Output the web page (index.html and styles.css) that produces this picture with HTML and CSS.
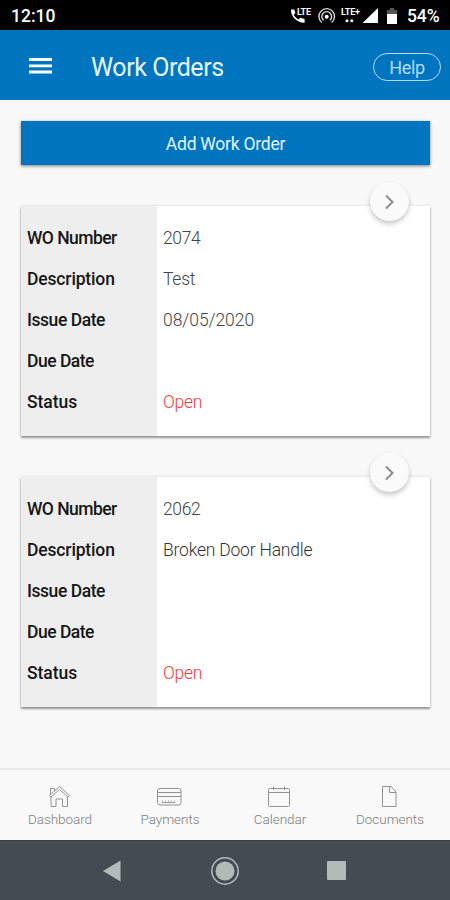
FILE: index.html
```html
<!DOCTYPE html>
<html lang="en">
<head>
<meta charset="utf-8">
<title>Work Orders</title>
<link rel="stylesheet" href="styles.css">
</head>
<body>
<div class="statusbar">
  <span class="clock">12:10</span>
  <svg class="status-icons" width="92" height="20" viewBox="0 0 92 20" fill="#fff">
    <path d="M1 3.500h3.200l1.200 3.600-1.700 1.700c1.200 2.200 2.600 3.600 4.800 4.800l1.800-1.800 4.300 1.200v3.700C7.500 17.200.5 10.500 1 3.500z"/>
    <text class="lte" x="7" y="9" textLength="14">LTE</text>
    <g fill="none" stroke="#ddd" stroke-width="1.400">
      <path d="M31.800 16.500a7.800 7.800 0 1 1 9.800 0M33.600 14.300a4.900 4.900 0 1 1 6.200 0"/>
    </g>
    <circle cx="36.700" cy="10.800" r="2"/>
    <text class="lte" x="51" y="8.500" textLength="19">LTE+</text>
    <circle cx="57" cy="14.800" r="1.500"/><circle cx="61.800" cy="14.800" r="1.500"/>
    <path d="M88 2v15H72.500z"/>
  </svg>
  <svg class="battery" width="12" height="18" viewBox="0 0 12 18">
    <path d="M4 1h4v2h3v5H1V3h3z" fill="#555"/><path d="M1 7h10v10H1z" fill="#fff"/>
  </svg>
  <span class="percent">54%</span>
</div>
<header class="appbar">
  <svg class="menu" width="24" height="18" viewBox="0 0 24 18"><path d="M1 2.500h23M1 8.800h23M1 15h23" stroke="#fff" stroke-width="2.800"/></svg>
  <h1 class="title">Work Orders</h1>
  <span class="help">Help</span>
</header>
<main class="content">
  <div class="add">Add Work Order</div>
  <section class="card">
    <div class="go"><svg width="12" height="16" viewBox="0 0 12 16"><path d="M2 1.500l6.500 6.500L2 14.500"/></svg></div>
    <div class="labels"><span class="l1">WO Number</span><span class="l2">Description</span><span class="l3">Issue Date</span><span class="l4">Due Date</span><span class="l5">Status</span></div>
    <div class="values"><span class="num">2074</span><span>Test</span><span class="date">08/05/2020</span><span></span><span class="open">Open</span></div>
  </section>
  <section class="card">
    <div class="go"><svg width="12" height="16" viewBox="0 0 12 16"><path d="M2 1.500l6.500 6.500L2 14.500"/></svg></div>
    <div class="labels"><span class="l1">WO Number</span><span class="l2">Description</span><span class="l3">Issue Date</span><span class="l4">Due Date</span><span class="l5">Status</span></div>
    <div class="values"><span class="num">2062</span><span class="desc">Broken Door Handle</span><span></span><span></span><span class="open">Open</span></div>
  </section>
</main>
<nav class="tabs">
  <div class="tab"><svg width="26" height="24" viewBox="0 0 26 24"><path d="M2.500 10.500L12.500 1.500 22.500 10.500l-1.500 1.500-8.500-7.500-8.500 7.500zM4 12v9.500h5v-7.500h6.500v7.500h5V12M3.500 9.500V3.500h4v2.500"/></svg><span>Dashboard</span></div>
  <div class="tab"><svg width="26" height="24" viewBox="0 0 26 24"><rect x=".5" y="3.500" width="23.500" height="16.500" rx="2.500"/><path d="M.5 7.500h23.500M.5 11.500h23.500M5 17.500h13" /><path class="dots" d="M5 16h13"/></svg><span>Payments</span></div>
  <div class="tab"><svg width="26" height="24" viewBox="0 0 26 24"><rect x="1.500" y="3.500" width="21" height="18" rx="1"/><path d="M1.500 7.500h21M6.500 1.500v3.500M17.500 1.500v3.500"/></svg><span>Calendar</span></div>
  <div class="tab"><svg width="26" height="24" viewBox="0 0 26 24"><path d="M5.500 1.500h8.500l5 5.500v14.500H5.500zM12.500 1.500v6H19"/></svg><span>Documents</span></div>
</nav>
<footer class="sysnav">
  <svg width="20" height="24" viewBox="0 0 20 24"><path d="M0 12L17.500 1.500v21z"/></svg>
  <svg class="home" width="30" height="30" viewBox="0 0 30 30"><circle cx="15" cy="15" r="9.500"/><circle class="ring" cx="15" cy="15" r="13.200"/></svg>
  <svg width="20" height="20" viewBox="0 0 20 20"><rect x="0" y="0" width="19" height="19" rx="1"/></svg>
</footer>
</body>
</html>
```
FILE: styles.css
```css
* { box-sizing: border-box; }
body { margin: 0; width: 450px; height: 900px; display: flex; flex-direction: column; background: #f8f8f8; font-family: Roboto, sans-serif; overflow: hidden; }
.statusbar { height: 30px; flex: none; background: #000; color: #fff; display: flex; align-items: center; padding: 2px 10px 0 11px; font-weight: 500; font-size: 17.500px; }
.status-icons { margin-left: auto; flex: none; }
.lte { font-size: 9px; font-weight: 700; }
.battery { margin: 0 9px 0 4px; flex: none; }
.percent { width: 33px; letter-spacing: -.1px; }
.appbar { height: 70px; flex: none; background: #0075bf; display: flex; align-items: center; padding: 3px 9px 0 28px; color: #fff; }
.menu { margin: -2px 39px 0 0; }
.title { margin: 2px 0 0; font-size: 25px; font-weight: 400; letter-spacing: -.45px; color: #e9f5ff; }
.help { margin-left: auto; width: 68px; height: 28px; border: 1.500px solid #b6dcf5; border-radius: 14px; font-size: 18px; line-height: 28px; letter-spacing: -.4px; text-align: center; color: #b6dcf5; }
.content { flex: 1; padding: 21px 20px 0 21px; }
.add { height: 44px; background: #0075bf; color: #e4f3ff; font-size: 17.500px; line-height: 46px; letter-spacing: -.25px; text-align: center; box-shadow: 0 1px 3px rgba(0,0,0,.5); }
.card { position: relative; margin-top: 41px; height: 230px; display: flex; background: #fff; box-shadow: 0 2px 2px rgba(0,0,0,.38), 0 0 3px rgba(0,0,0,.12); }
.labels, .values { display: flex; flex-direction: column; padding-top: 11.900px; font-size: 17.500px; line-height: 41.150px; }
.labels span, .values span { height: 41.150px; white-space: nowrap; }
.labels { width: 136px; padding-left: 6px; background: #eee; color: #161616; font-weight: 500; }
.l1 { letter-spacing: -.55px; }
.l2 { letter-spacing: -.15px; }
.l3 { letter-spacing: -.45px; }
.l4 { letter-spacing: -.5px; }
.l5 { letter-spacing: -.05px; }
.values { padding-left: 6px; color: #444; font-weight: 300; letter-spacing: -.25px; }
.values .num { letter-spacing: -.35px; }
.values .date { letter-spacing: -.05px; }
.values .desc { letter-spacing: -.2px; color: #333; }
.values .open { color: #f03c3c; }
.go { position: absolute; right: 21px; top: -24px; width: 39px; height: 39px; border-radius: 50%; background: #fafafa; box-shadow: 0 3px 5px rgba(0,0,0,.22); display: flex; align-items: center; justify-content: center; }
.go path { fill: none; stroke: #8c8c8c; stroke-width: 2; }
.tabs { height: 72px; flex: none; border-top: 2px solid #e8e8e8; display: grid; grid-template-columns: repeat(4, 110px); padding: 15px 5px 0; background: #f9f9f9; }
.tab { display: flex; flex-direction: column; align-items: center; font-size: 13.500px; color: #7d7d7d; font-weight: 300; line-height: 21px; letter-spacing: -.05px; }
.tab svg { fill: none; stroke: #929292; stroke-width: 1; }
.tab .dots { stroke-dasharray: 1 2; }
.sysnav { height: 60px; flex: none; background: #444c51; border-top: 1px solid #363e42; display: flex; align-items: center; justify-content: center; gap: 87px; fill: #b3babb; }
.home .ring { fill: none; stroke: #b3babb; stroke-width: 1.500; }
```
